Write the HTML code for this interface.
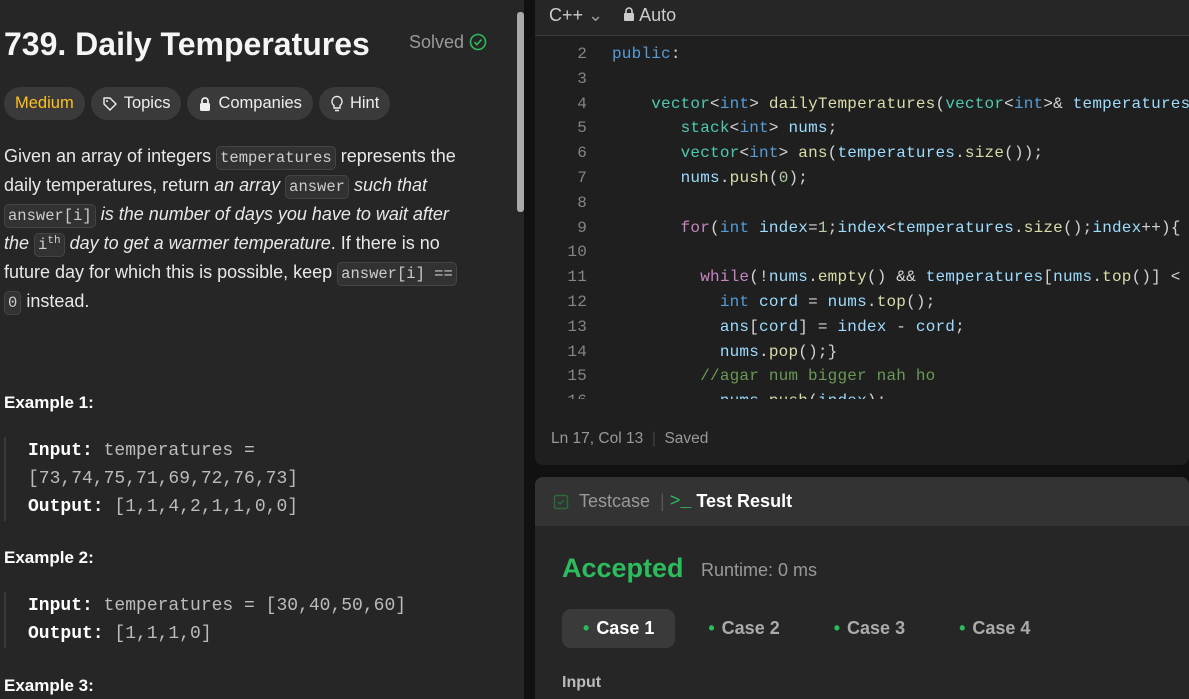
<!DOCTYPE html>
<html><head><style>
*{margin:0;padding:0;box-sizing:border-box}
body{width:1189px;height:699px;background:#111;overflow:hidden;position:relative;font-family:"Liberation Sans",sans-serif;color:#eee}
.left{position:absolute;left:0;top:0;width:524px;height:699px;background:#262626}
.sb{position:absolute;left:517px;top:12px;width:7px;height:200px;background:#aaa;border-radius:3px}
h1{position:absolute;left:4px;top:26px;font-size:32px;font-weight:700;color:#f5f5f5;letter-spacing:0}
.solved{position:absolute;left:409px;top:32px;font-size:18px;color:#9a9a9a}
.tags{position:absolute;left:4px;top:87px;display:flex;gap:6px}
.tag{height:33px;border-radius:17px;background:#3a3a3a;padding:0 11px;font-size:16.5px;line-height:33px;color:#eee;display:flex;align-items:center;gap:6px}
.desc{position:absolute;left:4px;top:142px;width:490px;font-size:18px;line-height:29px;color:#e8e8e8}
code{font-family:"Liberation Mono",monospace;font-size:15.5px;line-height:1;background:#323232;border:1px solid #444;border-radius:5px;padding:2px 3px;color:#ccc}
sup{font-size:11px;line-height:0;vertical-align:6px}
.ex{position:absolute;left:4px;font-size:17px;font-weight:700;color:#fff}
.blk{position:absolute;left:4px;border-left:2px solid #3a3a3a;padding-left:22px;font-family:"Liberation Mono",monospace;font-size:18px;line-height:28px;color:#bbb}
.blk b{color:#fff}
.ed{position:absolute;left:535px;top:0;width:654px;height:465px;background:#1f1f1f;border-radius:0 0 8px 8px}
.edh{height:36px;border-bottom:1px solid #3a3a3a;font-size:18px;color:#ccc;padding:5px 0 0 14px;background:#262626}
.code{position:absolute;left:0;top:42px;font-family:"Liberation Mono",monospace;font-size:16px;letter-spacing:.2px;line-height:24.8px;white-space:pre;color:#d4d4d4;height:357px;overflow:hidden;width:654px}
.ln{display:inline-block;width:52px;text-align:right;color:#858585;margin-right:25px}
.t{color:#4ec9b0}.k{color:#569cd6}.f{color:#dcdcaa}.v{color:#9cdcfe}.p{color:#c586c0}.c{color:#6a9955}.n{color:#b5cea8}
.status{position:absolute;left:16px;top:430px;font-size:15.5px;color:#999}
.bot{position:absolute;left:535px;top:477px;width:654px;height:222px;background:#262626;border-radius:8px 8px 0 0;overflow:hidden}
.both{height:49px;background:#333;font-size:18px;display:flex;align-items:center;padding-left:18px;color:#999}
.acc{position:absolute;left:27px;top:76px;font-size:27px;font-weight:600;color:#2cbb5d}
.rt{position:absolute;left:166px;top:83px;font-size:18px;color:#999}
.cases{position:absolute;left:27px;top:132px;display:flex}
.case{height:39px;border-radius:9px;padding:0 21px;font-size:18px;font-weight:600;line-height:39px;color:#aaa;margin-right:12px}
.case i{color:#2cbb5d;font-style:normal;margin-right:7px}
.inp{position:absolute;left:27px;top:197px;font-size:16px;font-weight:600;color:#bbb}
</style></head><body>
<div class="left">
<div class="sb"></div>
<h1>739. Daily Temperatures</h1>
<div class="solved">Solved <svg width="18" height="18" viewBox="0 0 18 18" style="vertical-align:-3px"><circle cx="9" cy="9" r="7.5" fill="none" stroke="#2cbb5d" stroke-width="1.6"/><path d="M5.5 9.2l2.4 2.4 4.6-5" fill="none" stroke="#2cbb5d" stroke-width="1.6"/></svg></div>
<div class="tags">
<div class="tag" style="color:#ffc01e">Medium</div>
<div class="tag"><svg width="16" height="16" viewBox="0 0 16 16"><path d="M2 2h6l6 6-6 6-6-6z" fill="none" stroke="#eee" stroke-width="1.4" stroke-linejoin="round"/><circle cx="5" cy="5" r="1" fill="#eee"/></svg>Topics</div>
<div class="tag"><svg width="14" height="16" viewBox="0 0 14 16"><path d="M4 7V5a3 3 0 016 0v2" fill="none" stroke="#eee" stroke-width="1.8"/><rect x="2" y="7" width="10" height="8" rx="1.5" fill="#eee"/></svg>Companies</div>
<div class="tag"><svg width="14" height="18" viewBox="0 0 14 18"><path d="M7 1.5a5 5 0 00-3 9v2.5h6v-2.5a5 5 0 00-3-9zM5 15.5h4" fill="none" stroke="#eee" stroke-width="1.4"/></svg>Hint</div>
</div>
<div class="desc">Given an array of integers <code>temperatures</code> represents the<br>daily temperatures, return <i>an array</i> <code>answer</code> <i>such that</i><br><code>answer[i]</code> <i>is the number of days you have to wait after</i><br><i>the</i> <code>i<sup>th</sup></code> <i>day to get a warmer temperature</i>. If there is no<br>future day for which this is possible, keep <code>answer[i] == </code><br><code>0</code> instead.</div>
<div class="ex" style="top:393px">Example 1:</div>
<div class="blk" style="top:437px"><b>Input:</b> temperatures =<br>[73,74,75,71,69,72,76,73]<br><b>Output:</b> [1,1,4,2,1,1,0,0]</div>
<div class="ex" style="top:548px">Example 2:</div>
<div class="blk" style="top:592px"><b>Input:</b> temperatures = [30,40,50,60]<br><b>Output:</b> [1,1,1,0]</div>
<div class="ex" style="top:676px">Example 3:</div>
</div>
<div class="ed">
<div class="edh">C++ <span style="color:#999">&#8964;</span> &nbsp;&nbsp; <svg width="12" height="14" viewBox="0 0 12 14"><path d="M3 6V4a3 3 0 016 0v2" fill="none" stroke="#ccc" stroke-width="1.6"/><rect x="1" y="6" width="10" height="8" rx="1" fill="#ccc"/></svg> Auto</div>
<div class="code"><span class="ln">2</span><span class="k">public</span>:
<span class="ln">3</span>
<span class="ln">4</span>    <span class="t">vector</span>&lt;<span class="k">int</span>&gt; <span class="f">dailyTemperatures</span>(<span class="t">vector</span>&lt;<span class="k">int</span>&gt;&amp; <span class="v">temperatures</span>
<span class="ln">5</span>       <span class="t">stack</span>&lt;<span class="k">int</span>&gt; <span class="v">nums</span>;
<span class="ln">6</span>       <span class="t">vector</span>&lt;<span class="k">int</span>&gt; <span class="f">ans</span>(<span class="v">temperatures</span>.<span class="f">size</span>());
<span class="ln">7</span>       <span class="v">nums</span>.<span class="f">push</span>(<span class="n">0</span>);
<span class="ln">8</span>
<span class="ln">9</span>       <span class="p">for</span>(<span class="k">int</span> <span class="v">index</span>=<span class="n">1</span>;<span class="v">index</span>&lt;<span class="v">temperatures</span>.<span class="f">size</span>();<span class="v">index</span>++){
<span class="ln">10</span>
<span class="ln">11</span>         <span class="p">while</span>(!<span class="v">nums</span>.<span class="f">empty</span>() &amp;&amp; <span class="v">temperatures</span>[<span class="v">nums</span>.<span class="f">top</span>()] &lt;
<span class="ln">12</span>           <span class="k">int</span> <span class="v">cord</span> = <span class="v">nums</span>.<span class="f">top</span>();
<span class="ln">13</span>           <span class="v">ans</span>[<span class="v">cord</span>] = <span class="v">index</span> - <span class="v">cord</span>;
<span class="ln">14</span>           <span class="v">nums</span>.<span class="f">pop</span>();}
<span class="ln">15</span>         <span class="c">//agar num bigger nah ho</span>
<span class="ln">16</span>           <span class="v">nums</span>.<span class="f">push</span>(<span class="v">index</span>);</div>
<div class="status">Ln 17, Col 13 &nbsp;<span style="color:#444">|</span>&nbsp; Saved</div>
</div>
<div class="bot">
<div class="both"><svg width="16" height="16" viewBox="0 0 16 16"><rect x="1.5" y="1.5" width="13" height="13" rx="2" fill="none" stroke="#2a6b3c" stroke-width="1.5"/><path d="M5 8l2 2 4-4" fill="none" stroke="#2a6b3c" stroke-width="1.4"/></svg>&nbsp;&nbsp;Testcase &nbsp;<span style="color:#555">|</span>&nbsp; <span style="color:#2cbb5d;font-family:'Liberation Mono',monospace">&gt;_</span>&nbsp;<b style="color:#fff;font-weight:600">Test Result</b></div>
<div class="acc">Accepted</div>
<div class="rt">Runtime: 0 ms</div>
<div class="cases"><div class="case" style="background:#3a3a3a;color:#fff"><i>•</i>Case 1</div><div class="case"><i>•</i>Case 2</div><div class="case"><i>•</i>Case 3</div><div class="case"><i>•</i>Case 4</div></div>
<div class="inp">Input</div>
</div>
</body></html>
